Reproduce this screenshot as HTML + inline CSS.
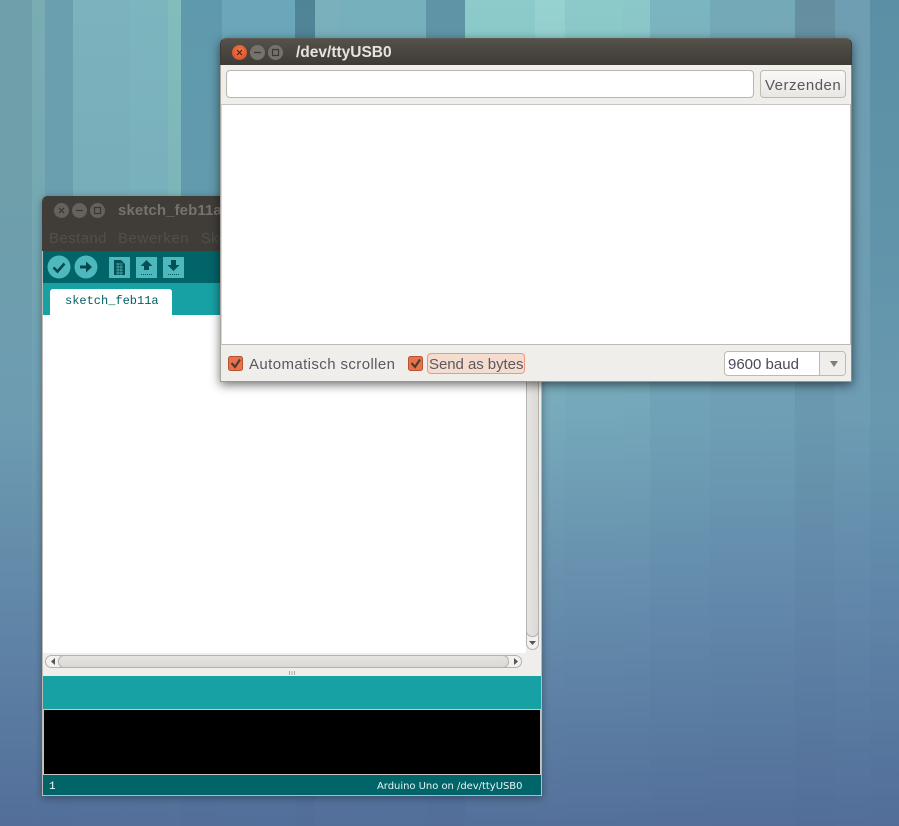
<!DOCTYPE html>
<html><head><meta charset="utf-8"><style>
html,body{margin:0;padding:0}
body{width:899px;height:826px;position:relative;overflow:hidden;font-family:"Liberation Sans",sans-serif;
background:#5a7ea0}
div,svg,span{position:absolute;box-sizing:border-box}
.t{white-space:nowrap;line-height:1}
#bg{left:0;top:0;width:899px;height:826px;background:linear-gradient(90deg,
#6f9fa9 0 32px,#79acb3 32px 45px,#6a9fb0 45px 73px,#7cb2bd 73px 130px,#7db5bf 130px 168px,#82bdbc 168px 181px,#5f99ad 181px 222px,#6aa7ba 222px 295px,#4f8396 295px 315px,#79b0bb 315px 340px,#76b0bc 340px 426px,#5e94a6 426px 465px,#8ccbca 465px 535px,#96d2cf 535px 565px,#8ccaca 565px 622px,#8bc8c9 622px 650px,#7bb5bf 650px 710px,#74a9b7 710px 795px,#648fa0 795px 835px,#6f9db1 835px 870px,#5b8fa5 870px 899px)}
#ov{left:0;top:0;width:899px;height:826px;background:linear-gradient(180deg,rgba(106,159,176,0) 0,rgba(106,159,176,.25) 190px,rgba(108,155,180,.75) 420px,rgba(95,132,168,.88) 600px,rgba(81,108,152,.96) 826px)}
.btn{border-radius:50%;width:15px;height:15px}
</style></head><body>
<div id="bg"></div><div id="ov"></div>

<!-- Arduino window -->
<div style="left:42px;top:196px;width:500px;height:600px;background:#f0eeeb;border-radius:5px 5px 0 0;box-shadow:0 2px 8px rgba(0,0,0,.35);overflow:hidden">
  <div style="left:0;top:0;width:500px;height:55px;background:#403d39"></div>
  <div class="btn" style="left:12px;top:7px;background:#65625e"></div>
  <div class="btn" style="left:30px;top:7px;background:#65625e"></div>
  <div class="btn" style="left:48px;top:7px;background:#65625e"></div>
  <svg style="left:12px;top:7px" width="51" height="15" fill="none" stroke="#3a3835" stroke-width="1.3"><path d="M5 5l5 5M10 5l-5 5M22 7.500h7M40.500 4.500h6v6h-6z"/></svg>
  <div class="t" style="left:76px;top:7px;font-size:15px;font-weight:bold;color:#76726b;letter-spacing:.1px">sketch_feb11a</div>
  <div class="t" style="left:7px;top:35px;font-size:15px;color:#524f4a;letter-spacing:.4px">Bestand</div>
  <div class="t" style="left:76px;top:35px;font-size:15px;color:#524f4a;letter-spacing:.55px">Bewerken</div>
  <div class="t" style="left:159px;top:35px;font-size:15px;color:#524f4a">Sketch</div>
  <div style="left:0;top:55px;width:500px;height:32px;background:#006468"></div>
  <div style="left:1px;top:87px;width:498px;height:32px;background:#17a1a5"></div>
  <div style="left:8px;top:93px;width:122px;height:26px;background:#fff;border-radius:3px 3px 0 0"></div>
  <div class="t" style="left:23px;top:98px;font:12px 'Liberation Mono',monospace;color:#005f63">sketch_feb11a</div>
  <svg style="left:0;top:55px" width="150" height="32">
    <circle cx="17" cy="16" r="11.500" fill="#4db9bd"/><circle cx="44" cy="16" r="11.500" fill="#4db9bd"/>
    <path d="M11.500 16.500l4 4 7-8" fill="none" stroke="#03484c" stroke-width="2.600"/>
    <path d="M38 14.500h6v-4l6 5.500-6 5.500v-4h-6z" fill="#03484c"/>
    <rect x="67" y="6" width="21" height="21" fill="#4db9bd"/><rect x="94" y="6" width="21" height="21" fill="#4db9bd"/><rect x="121" y="6" width="21" height="21" fill="#4db9bd"/>
    <path d="M72 9h7l4 4v11H72z" fill="#045054"/>
    <path d="M74 13h7M74 16h7M74 19h7M74 22h7M76 12v12M79 14v10" stroke="#4db9bd" stroke-width=".7" fill="none"/>
    <path d="M104.500 9l6 6h-3.500v4h-5v-4h-3.500z" fill="#045054"/>
    <path d="M99 23.500h11M126 23.500h11" stroke="#045054" stroke-dasharray="1 1" fill="none"/>
    <path d="M129 9h5v5h3.500l-6 6-6-6h3.500z" fill="#045054"/>
  </svg>
  <!-- editor -->
  <div style="left:1px;top:119px;width:483px;height:338px;background:#fff"></div>
  <!-- vertical scrollbar -->
  <div style="left:484px;top:119px;width:13px;height:335px;background:#f2f1ef;border:1px solid #b5b2ad;border-radius:0 0 7px 7px"></div>
  <div style="left:484px;top:119px;width:13px;height:322px;background:linear-gradient(90deg,#e6e4e1,#dbd9d5);border:1px solid #b5b2ad;border-radius:0 0 6px 6px"></div>
  <svg style="left:486px;top:444px" width="9" height="6"><path d="M1 1h7L4.500 5z" fill="#555"/></svg>
  <!-- hscroll -->
  <div style="left:3px;top:459px;width:477px;height:13px;background:#f2f1ef;border:1px solid #b5b2ad;border-radius:7px"></div>
  <div style="left:16px;top:459px;width:451px;height:13px;background:linear-gradient(#e6e4e1,#dbd9d5);border:1px solid #b5b2ad;border-radius:6px"></div>
  <svg style="left:6px;top:461px" width="472" height="9"><path d="M3 4.500L7 1v7zM466 1l4 3.500-4 3.500z" fill="#555"/></svg>
  <svg style="left:246px;top:474px" width="8" height="6"><path d="M1.500 1v4M4 1v4M6.500 1v4" stroke="#aaa" stroke-width="1"/></svg>
  <div style="left:1px;top:480px;width:498px;height:33px;background:#17a1a5"></div>
  <div style="left:1px;top:513px;width:498px;height:66px;background:#000;border:1px solid #c8c6c2"></div>
  <div style="left:1px;top:579px;width:498px;height:20px;background:#006468"></div>
  <div class="t" style="left:7px;top:585px;font:11px 'Liberation Mono',monospace;color:#fff">1</div>
  <div class="t" style="left:335px;top:585px;font:10px 'DejaVu Sans',sans-serif;color:#e8f4f4;letter-spacing:-.03px">Arduino Uno on /dev/ttyUSB0</div>
  <div style="left:0;top:0;width:500px;height:600px;border-left:1px solid #bdbab5;border-right:1px solid #bdbab5;border-bottom:1px solid #bdbab5;border-radius:5px 5px 0 0"></div>
  <div style="left:0;top:0;width:500px;height:55px;border-left:1px solid #403d39;border-right:1px solid #403d39;border-radius:5px 5px 0 0"></div>
</div>

<!-- Serial window -->
<div style="left:220px;top:38px;width:632px;height:344px;background:#f0eeeb;border-radius:6px 6px 0 0;box-shadow:0 3px 10px rgba(0,0,0,.55);overflow:hidden">
  <div style="left:0;top:0;width:632px;height:27px;background:linear-gradient(#55524b,#3e3b36)"></div>
  <div class="btn" style="left:12px;top:7px;background:radial-gradient(circle at 50% 40%,#f6784a,#d5481c)"></div>
  <div class="btn" style="left:30px;top:7px;background:#75726b"></div>
  <div class="btn" style="left:48px;top:7px;background:#75726b"></div>
  <svg style="left:12px;top:7px" width="51" height="15" fill="none" stroke="#3a2a22" stroke-width="1.200"><path d="M5 5l5 5M10 5l-5 5"/><path stroke="#3a3835" d="M22 7.500h7M40.500 4.500h6v6h-6z"/></svg>
  <div class="t" style="left:76px;top:6px;font-size:15.500px;font-weight:bold;color:#e6e3dd;margin-top:1px">/dev/ttyUSB0</div>
  <div style="left:6px;top:32px;width:528px;height:28px;background:#fff;border:1px solid #b9b6b0;border-radius:4px"></div>
  <div style="left:540px;top:32px;width:86px;height:28px;background:linear-gradient(#faf9f8,#e9e7e3);border:1px solid #bdbab4;border-radius:4px"></div>
  <div class="t" style="left:545px;top:40px;font-size:15px;color:#59575f;letter-spacing:.5px">Verzenden</div>
  <div style="left:1px;top:66px;width:630px;height:241px;background:#fff;border-bottom:1px solid #bdbab4;border-top:1px solid #c8c6c2;border-right:1px solid #bdbab4;border-left:1px solid #d8d6d2"></div>
  <svg style="left:8px;top:318px" width="205" height="15">
    <rect x=".5" y=".5" width="14" height="14" rx="2" fill="#e8734a" stroke="#b9532f"/><path d="M3.500 7l3.500 4 5-7.500" fill="none" stroke="#4b3c36" stroke-width="2.200"/>
    <g transform="translate(180)"><rect x=".5" y=".5" width="14" height="14" rx="2" fill="#e8734a" stroke="#b9532f"/><path d="M3.500 7l3.500 4 5-7.500" fill="none" stroke="#4b3c36" stroke-width="2.200"/></g>
  </svg>
  <div class="t" style="left:29px;top:319px;font-size:15px;color:#5a5860;letter-spacing:.4px">Automatisch scrollen</div>
  <div style="left:207px;top:315px;width:98px;height:21px;background:#f4dccf;border:1px solid #ee9a78;border-radius:4px"></div>
  <div class="t" style="left:209px;top:319px;font-size:15px;color:#5a5860;letter-spacing:-.05px">Send as bytes</div>
  <div style="left:504px;top:313px;width:122px;height:25px;background:#fff;border:1px solid #bdbab4;border-radius:4px"></div>
  <div style="left:599px;top:314px;width:26px;height:23px;background:#f0eeeb;border-left:1px solid #bdbab4;border-radius:0 3px 3px 0"></div>
  <svg style="left:609px;top:322px" width="10" height="8"><path d="M1 1h8L5 7z" fill="#807d78"/></svg>
  <div class="t" style="left:508px;top:319px;font-size:15px;color:#4f4858">9600 baud</div>
  <div style="left:0;top:0;width:632px;height:344px;border-left:1px solid #a9a6a0;border-right:1px solid #8b8882;border-bottom:1px solid #9a9791;border-radius:6px 6px 0 0"></div>
  <div style="left:0;top:0;width:632px;height:27px;border-left:1px solid #3e3b36;border-right:1px solid #3e3b36;border-top:1px solid #5d5a53;border-radius:6px 6px 0 0"></div>
</div>
</body></html>
